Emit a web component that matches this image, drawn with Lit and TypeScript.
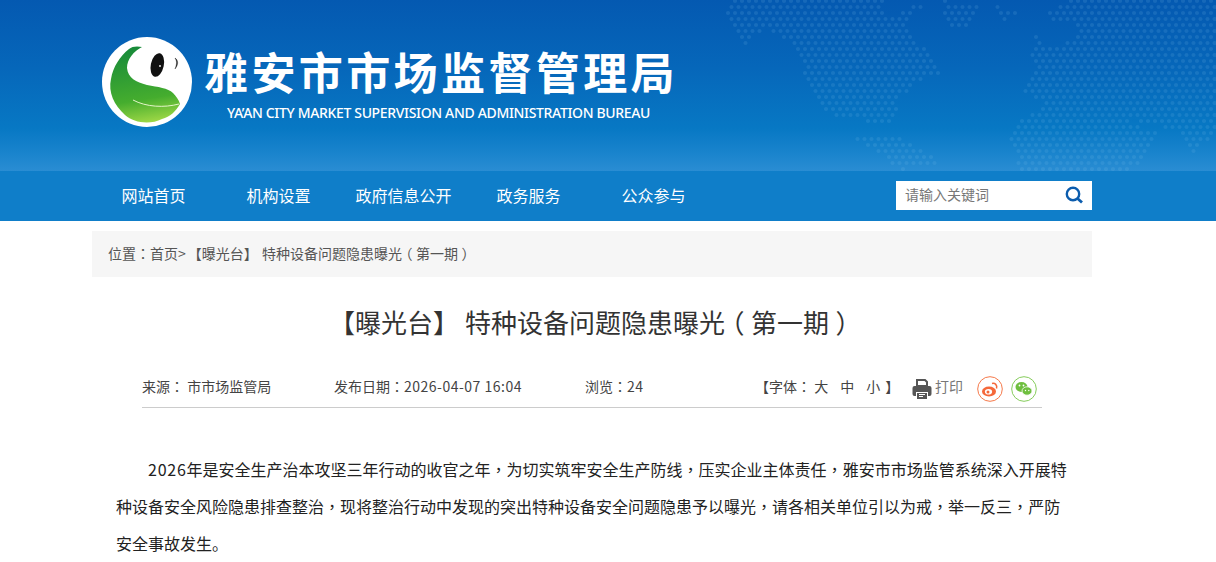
import { LitElement, html, css, svg } from "lit";
import { customElement } from "lit/decorators.js";

const P = (t: string) =>
  t.split(/([，：（）])/).map((s, i) => {
    if (!(i % 2)) return s;
    const cls = s === "（" || s === "）" ? "pu paren" : "pu";
    return html`<span class=${cls}>${s}</span>`;
  });

type Pt = [number, number];
const polys: Pt[][] = [
  [[75,35],[100,0],[555,0],[555,45],[590,45],[670,5],[660,30],[610,70],[640,110],[700,165],[725,225],[660,240],[600,290],[575,375],[480,360],[420,350],[380,340],[320,260],[310,180],[265,130],[200,90],[120,140],[100,90]],
  [[440,400],[510,400],[630,420],[730,495],[600,510],[520,450]],
  [[720,0],[840,10],[790,90],[740,70]],
  [[890,20],[955,35],[915,60]],
  [[1040,40],[1110,0],[1548,0],[1548,380],[1480,480],[1440,400],[1340,370],[1250,340],[1370,400],[1300,510],[960,510],[925,400],[970,350],[1040,320],[970,270],[1000,200],[985,160],[1010,100],[1040,140],[1080,140],[1130,100],[1110,70],[1040,70]],
];
const inside = (x: number, y: number, p: Pt[]) => {
  let c = false;
  for (let i = 0, j = p.length - 1; i < p.length; j = i++) {
    const [xi, yi] = p[i], [xj, yj] = p[j];
    if (yi > y !== yj > y && x < ((xj - xi) * (y - yi)) / (yj - yi) + xi) c = !c;
  }
  return c;
};
const dots: Pt[] = [];
for (let r = 0; r < 30; r++) {
  for (let q = 0; q < 90; q++) {
    const x = q * 7 + (r % 2 ? 3.5 : 0);
    const y = r * 6 + 1;
    const zx = x * 3, zy = y * 3;
    if (zy < 513 && polys.some((p) => inside(zx, zy, p))) dots.push([x, y]);
  }
}

@customElement("app-root")
export class AppRoot extends LitElement {
  static styles = css`
    :host {
      display: block;
      width: 1216px;
      height: 562px;
      overflow: hidden;
      background: #fff;
      font-family: "Noto Sans CJK SC", "Liberation Sans", sans-serif;
      color: #333;
    }
    .pu { font-family: "Noto Sans CJK TC", sans-serif; }
    .paren { display: inline-block; font-feature-settings: "halt"; padding: 0 0.25em; }
    .num { letter-spacing: 0.5px; }
    .banner {
      height: 171px;
      position: relative;
      overflow: hidden;
      background: linear-gradient(180deg, #0459b1 0%, #0667ba 40%, #0778c4 75%, #1a84cd 90%, #2a8dd3 100%);
    }
    .map { position: absolute; left: 700px; top: 0; width: 516px; height: 171px; }
    .brand {
      position: relative;
      display: flex;
      align-items: flex-start;
      padding: 37px 0 0 102px;
    }
    .logo { width: 90px; height: 90px; flex: none; }
    .names { margin-left: 12px; color: #fff; }
    .cn {
      font-size: 44px;
      font-weight: 700;
      line-height: 46px;
      margin-top: 11px;
      letter-spacing: 3.4px;
      white-space: nowrap;
    }
    .en {
      font-family: "Noto Sans", sans-serif;
      font-size: 14px;
      font-weight: 500;
      line-height: 20px;
      margin: 9px 0 0 23px;
      white-space: nowrap;
      letter-spacing: -0.34px;
    }
    nav {
      height: 50px;
      background: #0f7ec9;
      display: flex;
      align-items: center;
      padding-left: 91px;
    }
    nav a { width: 125px; text-align: center; color: #fff; font-size: 16px; flex: none; margin-top: -2px; }
    .search {
      margin-left: 180px;
      width: 196px;
      height: 29px;
      margin-top: -2px;
      background: #fff;
      display: flex;
      align-items: center;
      justify-content: space-between;
      padding: 0 8px 0 9px;
      box-sizing: border-box;
      color: #777;
      font-size: 14px;
    }
    .search span { margin-top: -2px; }
    .crumb {
      margin: 10px 124px 0 92px;
      height: 46px;
      box-sizing: border-box;
      padding: 0 0 3px 16px;
      background: #f6f6f6;
      display: flex;
      align-items: center;
      font-size: 14px;
      color: #555;
      white-space: pre;
      word-spacing: 1px;
    }
    .crumb b { font-weight: 400; margin-left: 2px; }
    h1 {
      margin: 26px 0 0 92px;
      width: 1000px;
      text-align: center;
      font-size: 26px;
      font-weight: 400;
      line-height: 38px;
      color: #333;
      white-space: pre;
    }
    .meta {
      margin: 26px 174px 0 142px;
      height: 37px;
      padding-bottom: 3px;
      border-bottom: 1px solid #ccc;
      display: flex;
      align-items: center;
      font-size: 14px;
      color: #444;
      white-space: pre;
    }
    .src { width: 192px; }
    .date { width: 251px; }
    .views { width: 170px; }
    .fonts { width: 157px; display: flex; flex: none; }
    .fonts i { font-style: normal; margin-right: 12px; }
    .fonts i:last-of-type { margin-right: 5px; }
    .print { display: flex; align-items: center; gap: 3px; color: #777; font-size: 14px; width: 65px; flex: none; }
    .print svg { flex: none; margin-top: 7px; }
    .share { display: flex; gap: 8px; margin-top: 7px; flex: none; }
    .body {
      margin: 43px 0 0 116px;
      width: 960px;
      font-size: 16px;
      line-height: 37px;
      color: #222;
      white-space: nowrap;
    }
    .body .num { letter-spacing: 0.75px; }
    .first { padding-left: 32px; }
  `;

  render() {
    return html`
      <div class="banner">
        <svg class="map" viewBox="0 0 516 171">
          ${dots.map(([x, y]) => svg`<circle cx=${x} cy=${y} r="2.1" fill="#7fc0ee" fill-opacity=".15" />`)}
        </svg>
        <div class="brand">
          <svg class="logo" viewBox="0 0 90 90">
            <defs>
              <linearGradient id="lg" x1="0.35" y1="0" x2="0.5" y2="1">
                <stop offset="0" stop-color="#178a3a" />
                <stop offset=".7" stop-color="#45ad2e" />
                <stop offset="1" stop-color="#9bd645" />
              </linearGradient>
            </defs>
            <circle cx="45" cy="45" r="45" fill="#fff" />
            <path d="M27 12 C30 9 36 9 40 10 C32 14 25 22 25 31 C26 41 34 45 45 48 C56 50 66 51 71 56 C74 59 77 63 78 67 C74 74 68 80 60 82 C48 88 32 86 23 78 C12 68 6 55 9 42 C11 30 18 19 27 12Z" fill="url(#lg)" />
            <path d="M31 63 C44 70 62 71 77 67" fill="none" stroke="#e4f5c8" stroke-width="1" />
            <ellipse cx="55.300" cy="28" rx="6.500" ry="12" transform="rotate(12 55.300 28)" fill="#111" />
            <circle cx="58" cy="29" r=".9" fill="#fff" />
            <path d="M73 21 C76 23 77 27 73 32 C75 27 75 24 73 21Z" fill="#222" stroke="#222" stroke-width=".4" />
          </svg>
          <div class="names">
            <div class="cn">雅安市市场监督管理局</div>
            <div class="en">YA’AN CITY MARKET SUPERVISION AND ADMINISTRATION BUREAU</div>
          </div>
        </div>
      </div>
      <nav>
        <a>网站首页</a><a>机构设置</a><a>政府信息公开</a><a>政务服务</a><a>公众参与</a>
        <div class="search">
          <span>请输入关键词</span>
          <svg width="20" height="20" viewBox="0 0 20 20" fill="none" stroke="#0b5cad">
            <circle cx="9" cy="9" r="6.200" stroke-width="2.400" />
            <path d="M13.500 13.500 L18 17.500" stroke-width="2.800" />
          </svg>
        </div>
      </nav>
      <div class="crumb"><span>${P("位置：首页>")}<b>${P("【曝光台】 特种设备问题隐患曝光（第一期）")}</b></span></div>
      <h1>${P("【曝光台】 特种设备问题隐患曝光（第一期）")}</h1>
      <div class="meta">
        <span class="src">${P("来源： 市市场监管局")}</span>
        <span class="date">${P("发布日期：")}<span class="num">2026-04-07 16:04</span></span>
        <span class="views">${P("浏览：")}<span class="num">24</span></span>
        <span class="fonts">${P("【字体：")}<i> 大</i><i>中</i><i>小</i>】</span>
        <span class="print"><svg width="20" height="20" viewBox="0 0 20 20">
            <path d="M5 1h8l2 2v4H5z" fill="none" stroke="#555" stroke-width="2" />
            <path d="M2.500 7h15a2 2 0 0 1 2 2v6a2 2 0 0 1-2 2H16v-4H4v4H2.500a2 2 0 0 1-2-2V9a2 2 0 0 1 2-2z" fill="#555" />
            <path d="M5 14h10v6H5z" fill="#555" />
            <path d="M7 15.500h6M7 17.500h4" stroke="#fff" />
          </svg><span>打印</span></span>
        <span class="share">
          <svg width="26" height="26" viewBox="0 0 26 26">
            <circle cx="13" cy="13" r="12.300" fill="#fff" stroke="#f5794a" />
            <ellipse cx="12" cy="15.500" rx="7" ry="5" fill="#f5683a" />
            <ellipse cx="11.500" cy="15.800" rx="3.600" ry="2.800" fill="#fff" />
            <circle cx="11" cy="16" r="1.500" fill="#f5683a" />
            <path d="M15 7.500c3-.8 5.500 1.500 4.500 5" fill="none" stroke="#f5683a" stroke-width="1.500" />
          </svg>
          <svg width="26" height="26" viewBox="0 0 26 26">
            <circle cx="13" cy="13" r="12.300" fill="#fff" stroke="#86cc5c" />
            <ellipse cx="10.500" cy="11" rx="6" ry="5" fill="#6fbf3f" />
            <ellipse cx="16" cy="15" rx="5" ry="4.200" fill="#6fbf3f" stroke="#fff" stroke-width=".8" />
            <circle cx="8.500" cy="9.500" r=".9" fill="#fff" />
            <circle cx="12.500" cy="9.500" r=".9" fill="#fff" />
            <circle cx="14.500" cy="14.500" r=".7" fill="#fff" />
            <circle cx="17.800" cy="14.500" r=".7" fill="#fff" />
          </svg>
        </span>
      </div>
      <div class="body">
        <div class="first"><span class="num">2026</span>${P("年是安全生产治本攻坚三年行动的收官之年，为切实筑牢安全生产防线，压实企业主体责任，雅安市市场监管系统深入开展特")}</div>
        <div>${P("种设备安全风险隐患排查整治，现将整治行动中发现的突出特种设备安全问题隐患予以曝光，请各相关单位引以为戒，举一反三，严防")}</div>
        <div>安全事故发生。</div>
      </div>
    `;
  }
}
